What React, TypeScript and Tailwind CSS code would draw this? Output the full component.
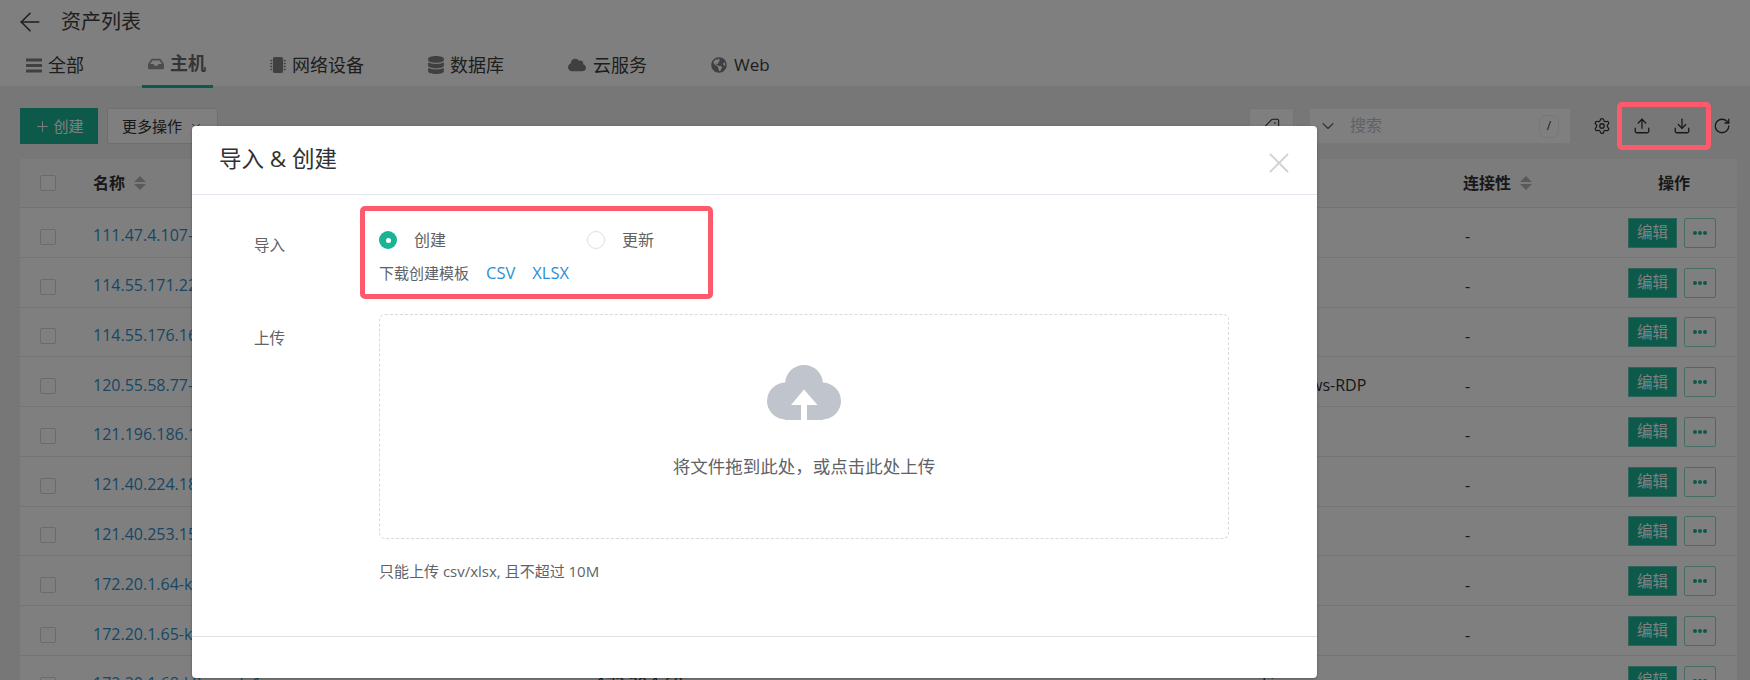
import { ArrowLeft, ChevronDown, Download, Plus, RotateCw, Settings, Tag, Upload, X } from "lucide-react";
import { FaCloud, FaDatabase, FaGlobeAmericas, FaInbox, FaMicrochip } from "react-icons/fa";

const FONT = '"Open Sans", "Noto Sans CJK SC", sans-serif';

const Bars = () => (
  <svg width="16" height="15" viewBox="0 0 16 15" fill="currentColor" aria-hidden="true">
    <rect x="0" y="0.5" width="16" height="3" rx="0.5" />
    <rect x="0" y="6" width="16" height="3" rx="0.5" />
    <rect x="0" y="11.5" width="16" height="3" rx="0.5" />
  </svg>
);

const tabs = [
  { label: "全部", icon: <Bars />, box: "w-4", gap: "gap-[6px]", size: "text-[18px]", active: false },
  { label: "主机", icon: <FaInbox className="w-4 h-4" />, box: "w-4", gap: "gap-[6px]", size: "text-[18px]", active: true },
  { label: "网络设备", icon: <FaMicrochip className="w-4 h-[18px]" />, box: "w-4", gap: "gap-[6px]", size: "text-[18px]", active: false },
  { label: "数据库", icon: <FaDatabase className="w-4 h-[18px]" />, box: "w-4", gap: "gap-[6px]", size: "text-[18px]", active: false },
  { label: "云服务", icon: <FaCloud className="w-[18px] h-[18px]" />, box: "w-[18px]", gap: "gap-[7px]", size: "text-[18px]", active: false },
  { label: "Web", icon: <FaGlobeAmericas className="w-4 h-4" />, box: "w-4", gap: "gap-[7px]", size: "text-[17px]", active: false },
];

const rows = [
  { name: "111.47.4.107-web01", ip: "", platform: "" },
  { name: "114.55.171.22-app01", ip: "", platform: "" },
  { name: "114.55.176.16-app02", ip: "", platform: "" },
  { name: "120.55.58.77-win01", ip: "", platform: "Windows-RDP" },
  { name: "121.196.186.12-db01", ip: "", platform: "" },
  { name: "121.40.224.18-app03", ip: "", platform: "" },
  { name: "121.40.253.15-app04", ip: "", platform: "" },
  { name: "172.20.1.64-k8s-master", ip: "", platform: "" },
  { name: "172.20.1.65-k8s-master", ip: "", platform: "" },
  { name: "172.20.1.68-k8s-node1", ip: "172.20.1.68", platform: "Linux" },
];

function Check() {
  return <span className="block w-4 h-4 rounded-[2px] border border-[#d6d6da] bg-white" />;
}

function Sort() {
  return (
    <svg width="12" height="14" viewBox="0 0 12 14" className="text-[#b4b4b8]">
      <path d="M6 0 12 6H0Z M0 8H12L6 14Z" fill="currentColor" />
    </svg>
  );
}

function Radio({ label, on }: { label: string; on?: boolean }) {
  return (
    <div className="w-[208px] flex items-center gap-[17px]">
      {on ? (
        <span className="w-[18px] h-[18px] rounded-full bg-[#1ab394] flex items-center justify-center">
          <span className="w-[5px] h-[5px] rounded-full bg-white" />
        </span>
      ) : (
        <span className="w-[18px] h-[18px] rounded-full border border-[#dcdfe6] bg-white" />
      )}
      <span className="text-[16px] text-[#606266]">{label}</span>
    </div>
  );
}

export default function App() {
  return (
    <div className="relative w-[1750px] h-[680px] overflow-hidden bg-[#eeeeef]" style={{ fontFamily: FONT }}>
      <header className="bg-white h-[88px] border-b-2 border-[#ececf0]">
        <div className="h-[44px] pl-[15px] flex items-center gap-[16px] text-[#3c3c3c]">
          <ArrowLeft className="w-[30px] h-[30px]" strokeWidth={1.3} />
          <h1 className="text-[20px] font-normal">资产列表</h1>
        </div>
        <nav className="h-[44px] pl-[20px] flex gap-[51px]">
          {tabs.map((t) => (
            <div
              key={t.label}
              className={`h-[44px] pl-[6px] pr-[7px] pb-[2px] flex items-center ${t.gap} ${t.size} ${
                t.active ? "border-b-[3px] border-[#1ab394] font-bold text-[#6b6b6b]" : "text-[#3c3c3c]"
              }`}
            >
              <span className={`${t.box} flex justify-center ${t.active ? "text-[#999]" : "text-[#808080]"}`}>{t.icon}</span>
              {t.label}
            </div>
          ))}
        </nav>
      </header>

      <div className="pl-[20px] pr-[8px] pt-[20px] flex justify-between items-center h-[56px]">
        <div className="flex gap-[9px] h-[36px] text-[15px]">
          <button className="w-[78px] bg-[#1ab394] text-white flex items-center justify-center gap-[2px]">
            <Plus className="w-[17px] h-[17px]" strokeWidth={1.3} />
            创建
          </button>
          <button className="w-[111px] bg-white border border-[#dcdfe6] rounded-[2px] text-[#303133] flex items-center pl-[14px] gap-[7px]">
            更多操作
            <ChevronDown className="w-[14px] h-[14px]" strokeWidth={1.5} />
          </button>
        </div>
        <div className="flex items-center h-[36px]">
          <button className="w-[45px] h-[36px] bg-white border border-[#e9e9ec] flex items-center justify-center text-[#303133] mr-[15px]">
            <Tag className="w-4 h-4 -scale-x-100" strokeWidth={1.6} />
          </button>
          <div className="w-[262px] h-[36px] bg-white border border-[#f0f0f2] flex items-center pl-[8px] pr-[11px] mr-[11px]">
            <ChevronDown className="w-[20px] h-[20px] text-[#606266]" strokeWidth={1.3} />
            <span className="ml-[12px] pb-[2px] text-[16px] text-[#c0c4cc] flex-1">搜索</span>
            <span className="w-[20px] h-[23px] rounded-[7px] border border-[#efeff1] flex items-center justify-center text-[12px] text-[#303133]">
              /
            </span>
          </div>
          {[Settings, Upload, Download, RotateCw].map((I, i) => (
            <span key={i} className="w-[40px] flex justify-center text-[#303133]">
              <I className="w-[18px] h-[18px]" strokeWidth={1.7} />
            </span>
          ))}
        </div>
      </div>

      <div className="ml-[20px] mr-[13px] mt-[15px] bg-white">
        <div className="grid grid-cols-[73px_504px_665px_201px_1fr] h-[49px] items-center bg-[#f9f9fa] border-b border-[#e4e4e8] text-[16px] font-bold text-[#303133]">
          <div className="pl-[20px]"><Check /></div>
          <div className="flex items-center gap-[9px]">名称 <Sort /></div>
          <div />
          <div />
          <div className="flex items-center justify-between pr-[21px]">
            <div className="flex items-center gap-[9px]">连接性 <Sort /></div>
            <div className="w-[84px] text-center">操作</div>
          </div>
        </div>
        {rows.map((r) => (
          <div key={r.name} className="grid grid-cols-[73px_504px_665px_201px_1fr] h-[49.78px] items-center border-b border-[#e9e9ec] text-[16px] text-[#303133]">
            <div className="pl-[20px] pt-[9px]"><Check /></div>
            <div className="pt-[6px] text-[#2f8fcb] whitespace-nowrap">{r.name}</div>
            <div className="pt-[6px]">{r.ip}</div>
            <div className="pt-[6px]">{r.platform}</div>
            <div className="flex items-center justify-between pr-[21px] pl-[2px]">
              <span className="pt-[8px]">-</span>
              <div className="flex gap-[7px] mt-[1px]">
                <button className="w-[49px] h-[30px] bg-[#1ab394] border border-[#5cc8b2] text-white text-[15.5px] flex items-center justify-center">编辑</button>
                <button className="w-[32px] h-[30px] rounded-[2px] border border-[#8fdccb] flex items-center justify-center gap-[1px]">
                  <i className="w-[4px] h-[4px] rounded-full bg-[#1ab394]" />
                  <i className="w-[4px] h-[4px] rounded-full bg-[#1ab394]" />
                  <i className="w-[4px] h-[4px] rounded-full bg-[#1ab394]" />
                </button>
              </div>
            </div>
          </div>
        ))}
      </div>

      {/* overlay */}
      <div className="absolute inset-0 bg-black/50" />

      {/* top annotation */}
      <div className="absolute left-[1617px] top-[102px] w-[94px] h-[48px] rounded-[5px] border-[5px] border-[#ff5a6b]" />

      {/* dialog */}
      <div className="absolute left-[192px] top-[126px] w-[1125px] h-[552px] bg-white rounded-[4px] shadow-[0_1px_3px_rgba(0,0,0,0.3)] flex flex-col">
        <div className="h-[69px] shrink-0 pl-[27px] pr-[21px] flex items-center justify-between border-b border-[#e4e7ed]">
          <h2 className="text-[22.5px] font-normal text-[#303133] pb-[2px]">导入 &amp; 创建</h2>
          <X className="w-[34px] h-[34px] mt-[6px] text-[#d2d2d2]" strokeWidth={1.3} />
        </div>
        <div className="flex-1 pt-[30px] pl-[62px] text-[#606266]">
          <div className="flex">
            <label className="w-[125px] leading-[40px] text-[15.5px]">导入</label>
            <div>
              <div className="h-[30px] flex items-center">
                <Radio label="创建" on />
                <Radio label="更新" />
              </div>
              <div className="h-[36px] flex items-center gap-[17px] text-[15px]">
                <span>下载创建模板</span>
                <span className="text-[16.5px] text-[#2a8fd8]">CSV</span>
                <span className="text-[16.5px] text-[#2a8fd8]">XLSX</span>
              </div>
            </div>
          </div>
          <div className="flex mt-[23px]">
            <label className="w-[125px] leading-[48px] text-[15.5px]">上传</label>
            <div>
              <div className="w-[850px] h-[225px] rounded-[6px] border border-dashed border-[#d9d9d9] flex flex-col items-center pt-[50px]">
                <svg width="74" height="55" viewBox="0 0 74 55" aria-hidden="true">
                  <g fill="#c0c4cc">
                    <circle cx="37" cy="19" r="19" />
                    <circle cx="18.5" cy="36" r="18.5" />
                    <circle cx="55.5" cy="36" r="18.5" />
                    <rect x="18" y="25" width="38" height="30" />
                  </g>
                  <path d="M37 24.5 50.5 40H40V55H34V40H24Z" fill="#fff" />
                </svg>
                <p className="mt-[33px] text-[17.5px] leading-[26px]">将文件拖到此处，或点击此处上传</p>
              </div>
              <p className="mt-[21px] text-[15px] leading-[22px]">只能上传 csv/xlsx, 且不超过 10M</p>
            </div>
          </div>
        </div>
        <div className="h-[42px] shrink-0 border-t border-[#e0e0e0]" />
      </div>

      {/* dialog annotation */}
      <div className="absolute left-[360px] top-[206px] w-[353px] h-[93px] rounded-[5px] border-[5px] border-[#ff5a6b]" />
    </div>
  );
}
